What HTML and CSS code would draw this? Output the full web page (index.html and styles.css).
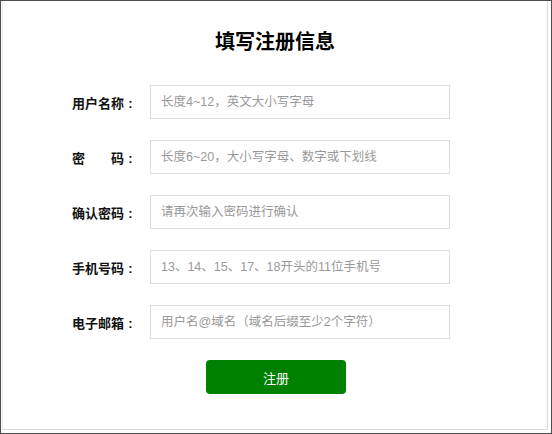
FILE: index.html
```html
<!DOCTYPE html>
<html lang="zh-CN">
<head>
    <meta charset="UTF-8">
    <meta name="viewport" content="width=device-width, initial-scale=1.0">
    <title>填写注册信息</title>
    <link rel="stylesheet" href="styles.css">
</head>
<body>
    <div class="frame">
        <div class="panel">
            <div class="title">填写注册信息</div>
            <form class="reg-form" onsubmit="return false;">
                <div class="row">
                    <label for="username">用户名称<span class="colon">:</span></label>
                    <input type="text" id="username" placeholder="长度4~12，英文大小写字母">
                </div>
                <div class="row">
                    <label for="password">密&emsp;&emsp;码<span class="colon">:</span></label>
                    <input type="password" id="password" placeholder="长度6~20，大小写字母、数字或下划线">
                </div>
                <div class="row">
                    <label for="confirm">确认密码<span class="colon">:</span></label>
                    <input type="password" id="confirm" placeholder="请再次输入密码进行确认">
                </div>
                <div class="row">
                    <label for="phone">手机号码<span class="colon">:</span></label>
                    <input type="text" id="phone" placeholder="13、14、15、17、18开头的11位手机号">
                </div>
                <div class="row">
                    <label for="email">电子邮箱<span class="colon">:</span></label>
                    <input type="text" id="email" placeholder="用户名@域名（域名后缀至少2个字符）">
                </div>
                <button class="submit-btn" type="submit">注册</button>
            </form>
        </div>
    </div>
</body>
</html>
```

FILE: styles.css
```css
* {
    margin: 0;
    padding: 0;
    box-sizing: border-box;
}
html, body {
    height: 100%;
}
body {
    font-family: "Liberation Sans", Arial, "Noto Sans CJK SC", sans-serif;
    background-color: #fff;
    color: #000;
}
.frame {
    height: 100%;
    border: 1px solid #4d4d4d;
    padding: 0 3px 3px 1px;
}
.panel {
    height: 100%;
    border-right: 1px solid #dcdcdc;
    border-bottom: 1px solid #dcdcdc;
    border-left: 1px solid #ececec;
}
.title {
    padding-top: 29px;
    font-size: 20px;
    line-height: 24px;
    font-weight: bold;
    text-align: center;
}
.reg-form {
    margin-top: 31px;
}
.row {
    display: flex;
    align-items: center;
    gap: 13px;
    padding-left: 54px;
    margin-bottom: 21px;
}
.row label {
    width: 80px;
    text-align: right;
    font-size: 13px;
    font-weight: bold;
    color: #111;
}
/* 冒号占一个字宽，居中 */
.colon {
    display: inline-block;
    width: 1em;
    text-align: center;
}
.row input {
    width: 300px;
    height: 34px;
    border: 1px solid #dddddd;
    padding: 0 10px;
    font-size: 12.5px;
    font-family: inherit;
    color: #333;
}
.row input::placeholder {
    color: #999;
}
.row input:focus {
    border-color: #66afe9;
    outline: none;
}
.submit-btn {
    display: block;
    width: 140px;
    height: 34px;
    margin: 0 0 0 203px;
    background-color: #008000;
    color: #fff;
    border: none;
    border-radius: 4px;
    font-size: 13px;
    font-family: inherit;
    cursor: pointer;
}
.submit-btn:hover {
    background-color: #006c00;
}
```
